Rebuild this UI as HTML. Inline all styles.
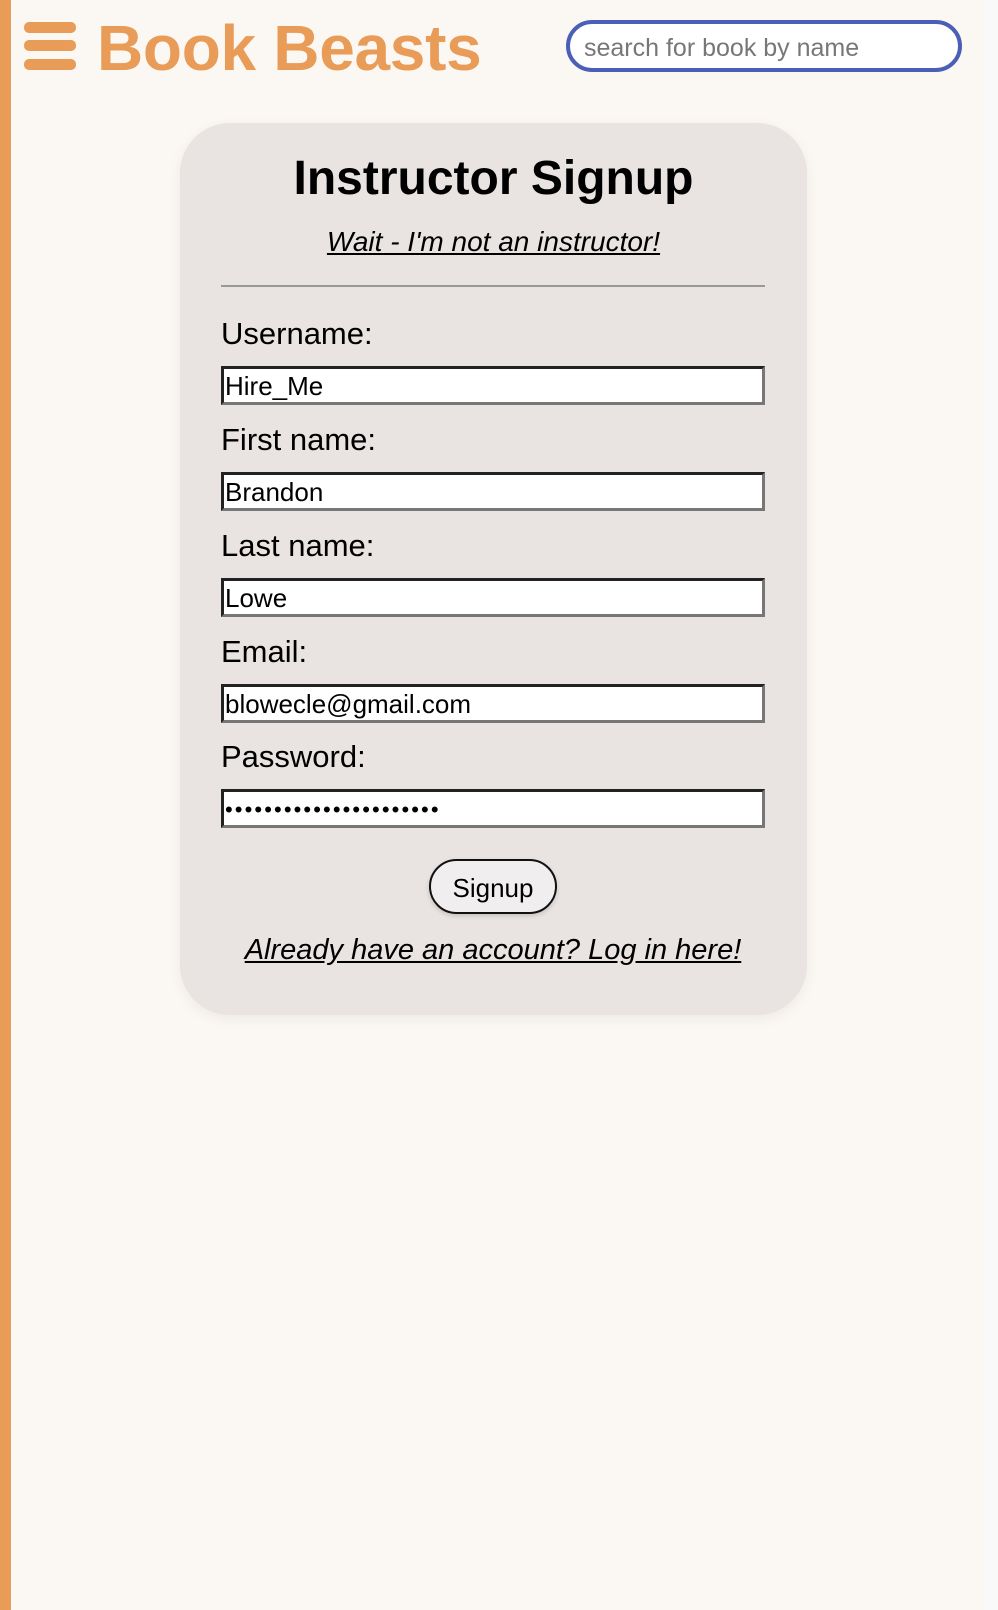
<!DOCTYPE html>
<html><head><meta charset="utf-8"><style>
body{margin:0;width:998px;height:1610px;background:#fbf8f4;font-family:"Liberation Sans",Arial,sans-serif;position:relative;overflow:hidden}
.bar{position:absolute;left:0;top:0;width:11px;height:1610px;background:#e89c57}
.rs{position:absolute;right:0;top:0;width:14px;height:1610px;background:#f9f9f9}
.ham{position:absolute;left:24px;width:52px;height:11px;border-radius:5px;background:#e89c57}
.logo{position:absolute;left:97px;top:11px;font-size:64px;font-weight:bold;color:#e89c57;letter-spacing:-0.3px}
.search{position:absolute;left:566px;top:20px;width:396px;height:52px;border:4px solid #4a5fb5;border-radius:28px;background:#fff;box-sizing:border-box;font-size:25px;color:#777;padding:10px 0 0 14px}
.card{position:absolute;left:180px;top:123px;width:627px;height:892px;background:#e9e3e1;border-radius:50px;box-shadow:0 4px 14px rgba(0,0,0,0.06)}
h1{position:absolute;left:0;width:627px;top:151px;margin:0;text-align:center;font-size:48px;font-weight:bold}
.wait{position:absolute;left:0;right:0;top:226px;text-align:center;font-size:28px;font-style:italic;text-decoration:underline}
.hr{position:absolute;left:221px;top:285px;width:544px;height:2px;background:#999}
.lab{position:absolute;left:221px;font-size:31px}
.inp{position:absolute;left:221px;width:544px;height:39px;box-sizing:border-box;background:#fff;border:3px solid;border-color:#222 #777 #777 #222;font-size:26px;padding:2px 0 0 1px}
.btn{position:absolute;left:429px;top:859px;width:128px;height:55px;box-sizing:border-box;border:2px solid #111;border-radius:28px;background:#f0eeee;text-align:center;font-size:26px;padding-top:12px;box-shadow:0 2px 5px rgba(0,0,0,.15)}
.already{position:absolute;left:-6px;width:998px;top:934px;text-align:center;font-size:29px;font-style:italic;text-decoration:underline}
</style></head><body>
<div class="bar"></div><div class="rs"></div>
<div class="ham" style="top:22px"></div><div class="ham" style="top:40px"></div><div class="ham" style="top:59px"></div>
<div class="logo">Book Beasts</div>
<div class="search">search for book by name</div>
<div class="card"></div>
<h1 style="left:180px">Instructor Signup</h1>
<div class="wait" style="left:180px;width:627px">Wait - I'm not an instructor!</div>
<div class="hr"></div>
<div class="lab" style="top:316px">Username:</div><div class="inp" style="top:366px">Hire_Me</div>
<div class="lab" style="top:422px">First name:</div><div class="inp" style="top:472px">Brandon</div>
<div class="lab" style="top:528px">Last name:</div><div class="inp" style="top:578px">Lowe</div>
<div class="lab" style="top:634px">Email:</div><div class="inp" style="top:684px">blowecle@gmail.com</div>
<div class="lab" style="top:739px">Password:</div><div class="inp" style="top:789px;font-size:22px;letter-spacing:2.1px;padding-top:5px">••••••••••••••••••••••</div>
<div class="btn">Signup</div>
<div class="already">Already have an account? Log in here!</div>
</body></html>
